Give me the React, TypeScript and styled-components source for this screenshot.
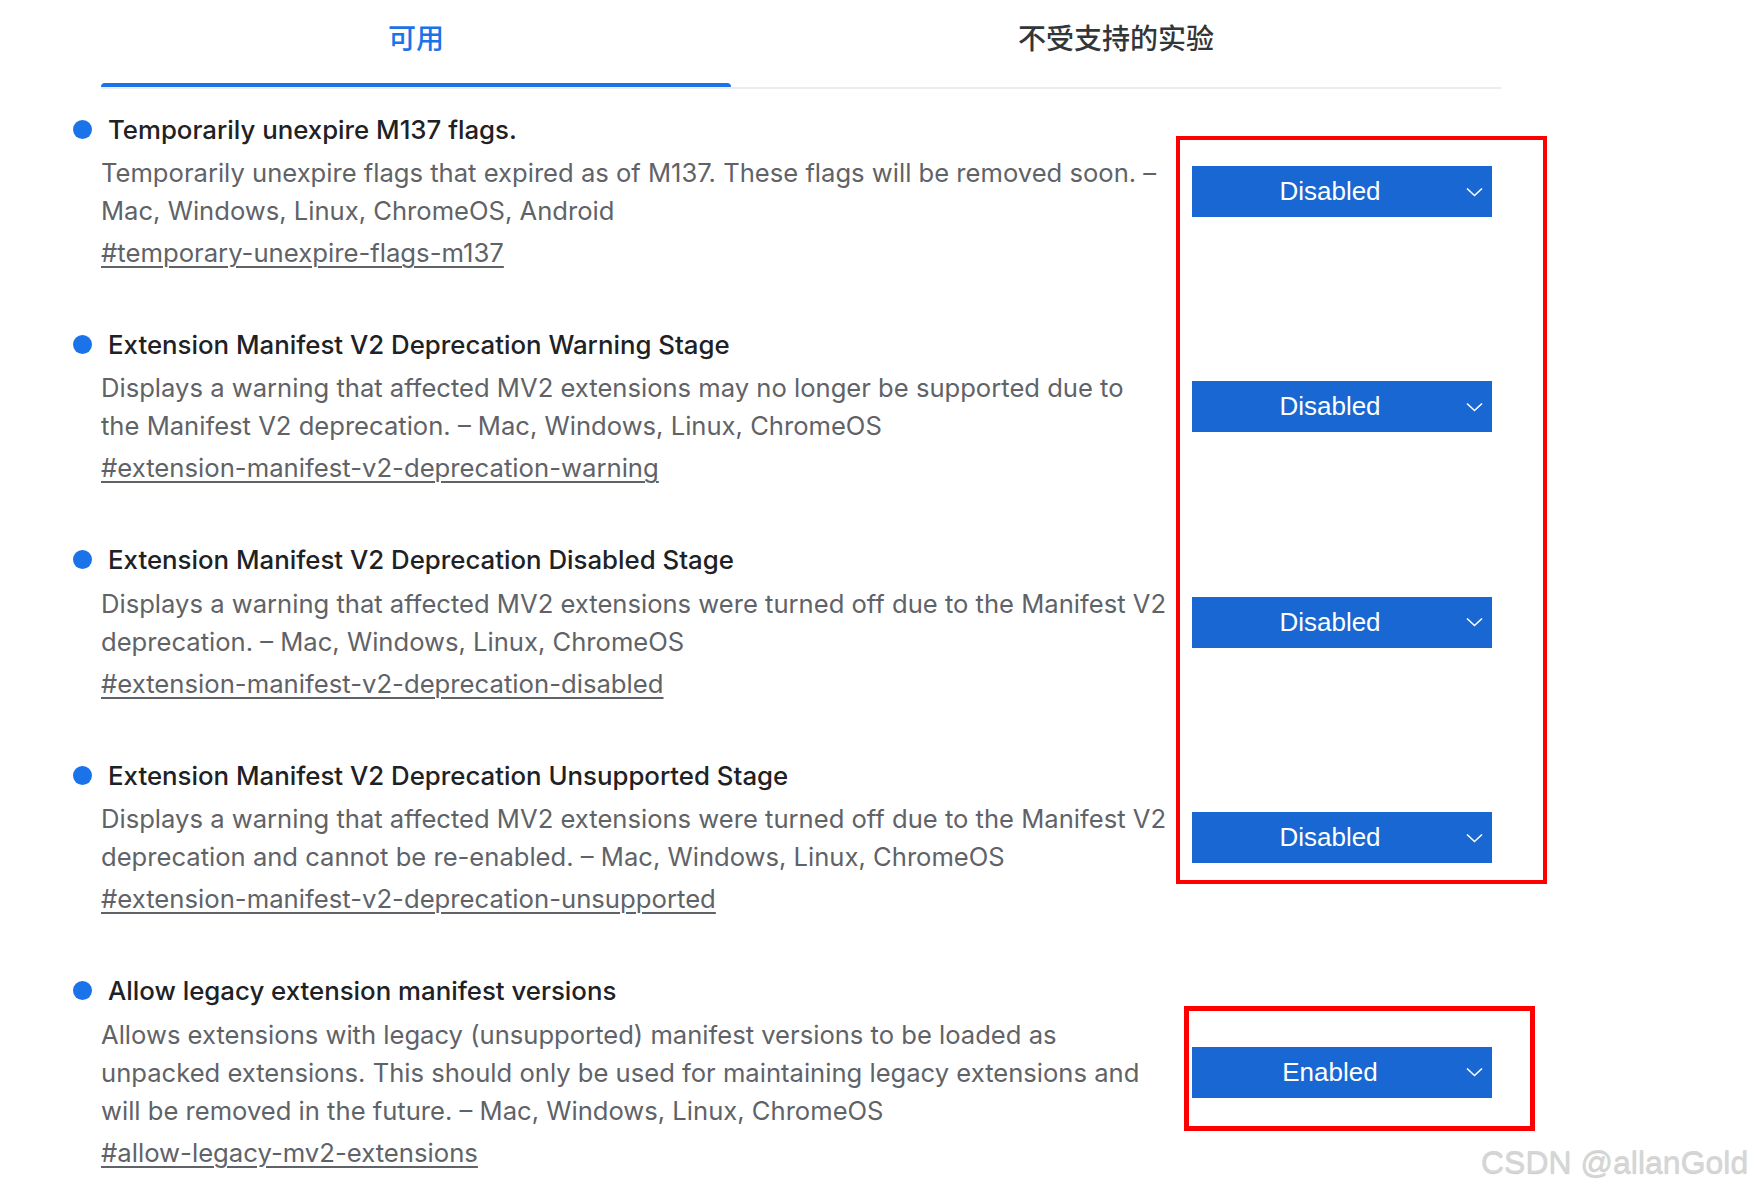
import React from "react";
import styled, { createGlobalStyle } from "styled-components";

const GlobalStyle = createGlobalStyle`
  html, body {
    margin: 0;
    padding: 0;
    background: #ffffff;
  }
  body {
    font-family: Inter, "Noto Sans", "Noto Sans CJK SC", sans-serif;
    -webkit-font-smoothing: antialiased;
  }
`;

const Page = styled.div`
  position: relative;
  width: 1754px;
  height: 1192px;
  overflow: hidden;
  padding-left: 101px;
  box-sizing: border-box;
`;

const TabBar = styled.div`
  display: flex;
  width: 1400px;
  border-bottom: 2px solid #ececec;
`;

const Tab = styled.div<{ $active?: boolean; $width: number }>`
  position: relative;
  width: ${(p) => p.$width}px;
  height: 87px;
  padding-bottom: 13px;
  box-sizing: border-box;
  display: flex;
  align-items: center;
  justify-content: center;
  font-family: "Noto Sans CJK SC", "Noto Sans", sans-serif;
  font-size: 28px;
  font-weight: 500;
  color: ${(p) => (p.$active ? "#1a73e8" : "#333639")};

  &::after {
    content: "";
    display: ${(p) => (p.$active ? "block" : "none")};
    position: absolute;
    left: 0;
    right: 0;
    bottom: 0;
    height: 4px;
    border-radius: 4px 4px 0 0;
    background: #1a73e8;
  }
`;

const List = styled.div`
  padding-top: 22px;
  display: flex;
  flex-direction: column;
  gap: 54.4px;
`;

const Row = styled.div`
  display: flex;
  align-items: center;
  gap: 23px;
`;

const Info = styled.div`
  width: 1068px;
  display: flex;
  flex-direction: column;
`;

const TitleRow = styled.div`
  display: flex;
  align-items: center;
  gap: 16px;
  margin-left: -28px;
  height: 36px;
`;

const Bullet = styled.span`
  width: 19px;
  height: 19px;
  border-radius: 50%;
  background: #1a73e8;
  flex: none;
`;

const Title = styled.span`
  font-size: 25.8px;
  font-weight: 500;
  color: #202124;
  white-space: nowrap;
`;

const Description = styled.div`
  margin-top: 7px;
  font-size: 25.6px;
  line-height: 38px;
  color: #5f6368;
`;

const Line = styled.div`
  white-space: nowrap;
`;

const Link = styled.a`
  margin-top: 4px;
  font-size: 25.7px;
  line-height: 38px;
  color: #5f6368;
  text-decoration: underline;
  text-underline-offset: 4px;
  text-decoration-thickness: 1.5px;
  align-self: flex-start;
`;

const Select = styled.div`
  position: relative;
  width: 300px;
  height: 51px;
  flex: none;
  background: #1967d2;
  color: #ffffff;
  font-family: "Liberation Sans", Arial, sans-serif;
  font-size: 26px;
  display: flex;
  align-items: center;
  justify-content: center;
  padding-right: 24px;
  box-sizing: border-box;
`;

const Chevron = styled.svg`
  position: absolute;
  right: 9px;
  top: 50%;
  margin-top: -5px;
`;

const Annotation = styled.div<{ $l: number; $t: number; $w: number; $h: number; $b: number }>`
  position: absolute;
  left: ${(p) => p.$l}px;
  top: ${(p) => p.$t}px;
  width: ${(p) => p.$w}px;
  height: ${(p) => p.$h}px;
  border: ${(p) => p.$b}px solid #ff0000;
  box-sizing: border-box;
  pointer-events: none;
`;

const Watermark = styled.div`
  position: absolute;
  left: 1481px;
  top: 1143px;
  font-family: "Liberation Sans", Arial, sans-serif;
  font-size: 32px;
  line-height: 38px;
  color: #d6d6d6;
  text-shadow: 0 1px 1px rgba(0, 0, 0, 0.22);
  white-space: nowrap;
`;

type Flag = {
  title: string;
  lines: string[];
  hash: string;
  value: string;
};

const flags: Flag[] = [
  {
    title: "Temporarily unexpire M137 flags.",
    lines: [
      "Temporarily unexpire flags that expired as of M137. These flags will be removed soon. –",
      "Mac, Windows, Linux, ChromeOS, Android",
    ],
    hash: "#temporary-unexpire-flags-m137",
    value: "Disabled",
  },
  {
    title: "Extension Manifest V2 Deprecation Warning Stage",
    lines: [
      "Displays a warning that affected MV2 extensions may no longer be supported due to",
      "the Manifest V2 deprecation. – Mac, Windows, Linux, ChromeOS",
    ],
    hash: "#extension-manifest-v2-deprecation-warning",
    value: "Disabled",
  },
  {
    title: "Extension Manifest V2 Deprecation Disabled Stage",
    lines: [
      "Displays a warning that affected MV2 extensions were turned off due to the Manifest V2",
      "deprecation. – Mac, Windows, Linux, ChromeOS",
    ],
    hash: "#extension-manifest-v2-deprecation-disabled",
    value: "Disabled",
  },
  {
    title: "Extension Manifest V2 Deprecation Unsupported Stage",
    lines: [
      "Displays a warning that affected MV2 extensions were turned off due to the Manifest V2",
      "deprecation and cannot be re-enabled. – Mac, Windows, Linux, ChromeOS",
    ],
    hash: "#extension-manifest-v2-deprecation-unsupported",
    value: "Disabled",
  },
  {
    title: "Allow legacy extension manifest versions",
    lines: [
      "Allows extensions with legacy (unsupported) manifest versions to be loaded as",
      "unpacked extensions. This should only be used for maintaining legacy extensions and",
      "will be removed in the future. – Mac, Windows, Linux, ChromeOS",
    ],
    hash: "#allow-legacy-mv2-extensions",
    value: "Enabled",
  },
];

export default function App() {
  return (
    <>
      <GlobalStyle />
      <Page>
        <TabBar>
          <Tab $active $width={630}>可用</Tab>
          <Tab $width={770}>不受支持的实验</Tab>
        </TabBar>
        <List>
          {flags.map((f) => (
            <Row key={f.hash}>
              <Info>
                <TitleRow>
                  <Bullet />
                  <Title>{f.title}</Title>
                </TitleRow>
                <Description>
                  {f.lines.map((l) => (
                    <Line key={l}>{l}</Line>
                  ))}
                </Description>
                <Link href={f.hash}>{f.hash}</Link>
              </Info>
              <Select>
                {f.value}
                <Chevron width="17" height="10" viewBox="0 0 17 10">
                  <polyline
                    points="1,1.5 8.5,8.5 16,1.5"
                    fill="none"
                    stroke="#ffffff"
                    strokeWidth="1.6"
                  />
                </Chevron>
              </Select>
            </Row>
          ))}
        </List>
        <Annotation $l={1176} $t={136} $w={371} $h={748} $b={4} />
        <Annotation $l={1184} $t={1006} $w={351} $h={125} $b={5} />
        <Watermark>CSDN @allanGold</Watermark>
      </Page>
    </>
  );
}
